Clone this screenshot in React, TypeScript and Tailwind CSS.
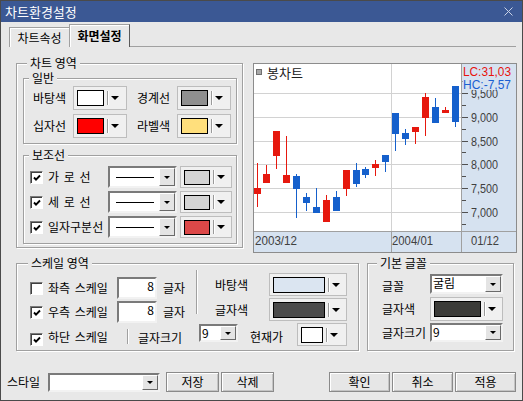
import React from "react";

type Kids = { children?: React.ReactNode };

function Tri() {
  return <div className="h-0 w-0 shrink-0 border-x-[4px] border-t-[4px] border-x-transparent border-t-black" />;
}

function SmallTri() {
  return <div className="h-0 w-0 shrink-0 border-x-[3px] border-t-[3px] border-x-transparent border-t-black" />;
}

function ColorBtn({ box, sw }: { box: string; sw: string }) {
  return (
    <div className={`flex shrink-0 items-center border border-[#bdbdbd] bg-[#f0f0f0] pl-[3px] ${box}`}>
      <div className={`shrink-0 border border-black ${sw}`} />
      <div className="ml-[3px] h-[14px] w-[2px] shrink-0 border-l border-[#9a9a9a] bg-white" />
      <div className="ml-[2px]">
        <Tri />
      </div>
    </div>
  );
}

function Combo({ box, children }: { box: string } & Kids) {
  return (
    <div
      className={`flex shrink-0 border-2 border-t-[#7a7a7a] border-l-[#7a7a7a] border-r-[#f2f2f2] border-b-[#f2f2f2] bg-white ${box}`}
    >
      <div className="min-w-0 flex-1">{children}</div>
      <div className="flex w-[16px] shrink-0 items-center justify-center border border-t-white border-l-white border-r-[#6a6a6a] border-b-[#6a6a6a] bg-[#e4e4e4]">
        <SmallTri />
      </div>
    </div>
  );
}

function Check({ on }: { on?: boolean }) {
  return (
    <div className="relative h-[13px] w-[13px] shrink-0 border border-t-[#7a7a7a] border-l-[#7a7a7a] border-r-white border-b-white bg-white shadow-[inset_1px_1px_0_#404040]">
      {on && (
        <svg className="absolute left-[2px] top-[2px]" width="8" height="8" viewBox="0 0 8 8">
          <path d="M1 3.5 L3 5.6 L7 1.5" fill="none" stroke="#000" strokeWidth="1.9" />
        </svg>
      )}
    </div>
  );
}

function Group({ label, lp, box, children }: { label: string; lp: string; box: string } & Kids) {
  return (
    <div className={`relative shrink-0 border border-[#a0a0a0] shadow-[inset_1px_1px_0_#fff,1px_1px_0_#fff] ${box}`}>
      <span className={`absolute top-[-7px] whitespace-nowrap bg-[#e8e8e8] px-[3px] leading-[12px] ${lp}`}>{label}</span>
      {children}
    </div>
  );
}

function Btn({ box, children }: { box: string } & Kids) {
  return (
    <div
      className={`flex h-[20px] shrink-0 items-center justify-center border border-[#8a8a8a] bg-[#e6e6e6] shadow-[inset_1px_1px_0_#fff,inset_-1px_-1px_0_#c4c4c4] ${box}`}
    >
      {children}
    </div>
  );
}

function VSep({ box }: { box: string }) {
  return <div className={`w-[2px] shrink-0 border-l border-[#a0a0a0] bg-white ${box}`} />;
}

const CANDLES: [number, number, number, number, number, number][] = [
  [0, 124, 130, 99, 143, 0],
  [9, 110, 119, 101, 119, 0],
  [19, 67, 92, 67, 105, 0],
  [29, 111, 119, 72, 119, 0],
  [39, 112, 125, 110, 154, 1],
  [49, 133, 139, 129, 147, 1],
  [59, 143, 149, 124, 149, 1],
  [69, 136, 158, 131, 158, 0],
  [79, 133, 147, 127, 147, 1],
  [89, 106, 125, 106, 132, 0],
  [99, 106, 120, 99, 123, 1],
  [108, 105, 111, 103, 114, 1],
  [118, 100, 104, 96, 112, 0],
  [128, 91, 98, 91, 108, 1],
  [138, 49, 70, 49, 87, 1],
  [148, 69, 75, 65, 81, 1],
  [158, 63, 68, 63, 80, 0],
  [168, 33, 54, 29, 72, 0],
  [178, 43, 59, 34, 59, 1],
  [188, 46, 49, 43, 49, 0],
  [198, 22, 58, 22, 63, 1],
];

const LEVELS: [number, string][] = [
  [29, "9,500"],
  [53, "9,000"],
  [77, "8,500"],
  [100, "8,000"],
  [124, "7,500"],
  [148, "7,000"],
];
const MINOR = [17, 41, 65, 88, 112, 136, 160];

function Chart() {
  const num = "'Liberation Sans', Arial, sans-serif";
  return (
    <div className="h-[190px] w-[264px] shrink-0 border border-[#8c8c8c] bg-white">
      <svg width="262" height="188" viewBox="0 0 262 188" className="block">
        <rect x="208" y="0" width="54" height="188" fill="#d6e2f0" />
        <rect x="0" y="168" width="262" height="20" fill="#d6e2f0" />
        {LEVELS.map(([y]) => (
          <line key={y} x1="0" x2="208" y1={y + 0.5} y2={y + 0.5} stroke="#d2d2d2" />
        ))}
        <line x1="137.5" x2="137.5" y1="0" y2="168" stroke="#d2d2d2" />
        <line x1="0" x2="262" y1="167.5" y2="167.5" stroke="#a0a0a0" />
        <line x1="137.5" x2="137.5" y1="168" y2="188" stroke="#a0a0a0" />
        <line x1="207.5" x2="207.5" y1="0" y2="188" stroke="#a0a0a0" />
        {LEVELS.map(([y]) => (
          <line key={"t" + y} x1="208" x2="214" y1={y + 0.5} y2={y + 0.5} stroke="#505050" />
        ))}
        {MINOR.map((y) => (
          <line key={"m" + y} x1="208" x2="212" y1={y + 0.5} y2={y + 0.5} stroke="#505050" />
        ))}
        {LEVELS.map(([y, t]) => (
          <text
            key={"l" + y}
            x="217"
            y={y + 5}
            fontSize="13"
            fill="#404040"
            fontFamily={num}
            textLength="27"
            lengthAdjust="spacingAndGlyphs"
          >
            {t}
          </text>
        ))}
        <rect x="208.5" y="0" width="53.5" height="26" fill="#d6e2f0" />
        <text x="209" y="12" fontSize="13" fill="#e8130c" fontFamily={num} textLength="48" lengthAdjust="spacingAndGlyphs">
          LC:31,03
        </text>
        <text x="209" y="25" fontSize="13" fill="#1a5fd2" fontFamily={num} textLength="48" lengthAdjust="spacingAndGlyphs">
          HC:-7,57
        </text>
        {CANDLES.map(([x, bt, bb, wt, wb, c]) => (
          <g key={x} fill={c ? "#1560cc" : "#e6180e"}>
            <rect x={x + 3} y={wt} width="1" height={wb - wt} />
            <rect x={x} y={bt} width="7" height={bb - bt} />
          </g>
        ))}
        <rect x="2.5" y="5.5" width="5" height="5" fill="#a8a8a8" stroke="#707070" />
        <text x="13" y="14" fontSize="13" fill="#202020" fontFamily="'Noto Sans CJK KR', sans-serif">
          봉차트
        </text>
        <text x="1" y="181" fontSize="13" fill="#404040" fontFamily={num} textLength="42" lengthAdjust="spacingAndGlyphs">
          2003/12
        </text>
        <text x="138" y="181" fontSize="13" fill="#404040" fontFamily={num} textLength="41" lengthAdjust="spacingAndGlyphs">
          2004/01
        </text>
        <text x="217" y="181" fontSize="13" fill="#404040" fontFamily={num} textLength="28" lengthAdjust="spacingAndGlyphs">
          01/12
        </text>
      </svg>
    </div>
  );
}

function LineRow({ label, sw }: { label: string; sw: string }) {
  return (
    <div className="flex h-[22px] items-center">
      <Check on />
      <span className="ml-[5px] w-[60px] whitespace-nowrap [word-spacing:2px]">{label}</span>
      <Combo box="h-[22px] w-[69px]">
        <div className="flex h-full items-center pl-[6px]">
          <div className="h-px w-[38px] bg-black" />
        </div>
      </Combo>
      <ColorBtn box="ml-[3px] h-[22px] w-[52px]" sw={sw} />
    </div>
  );
}

function ScaleRow({ on, label }: { on?: boolean; label: string }) {
  return (
    <div className="flex h-[22px] items-center">
      <Check on={on} />
      <span className="ml-[5px] w-[69px] whitespace-nowrap [word-spacing:2px]">{label}</span>
      <div className="flex h-[22px] w-[40px] shrink-0 justify-end border-2 border-t-[#7a7a7a] border-l-[#7a7a7a] border-r-[#f2f2f2] border-b-[#f2f2f2] bg-white pr-[1px]">
        8
      </div>
      <span className="ml-[6px] w-[24px] whitespace-nowrap">글자</span>
    </div>
  );
}

export default function App() {
  return (
    <div className="flex h-[401px] w-[523px] flex-col overflow-hidden border border-[#4a4a4a] bg-[#e8e8e8] font-['Noto_Sans_CJK_KR','Noto_Sans',sans-serif] text-[12px] leading-[14px] text-black">
      {/* title bar */}
      <div className="flex h-[21px] shrink-0 items-center justify-between bg-[#3b5894] pl-[4px] pr-[9px] text-[13px] text-white">
        <span>차트환경설정</span>
        <svg width="9" height="9" viewBox="0 0 9 9">
          <path d="M0.5 0.5 L8.5 8.5 M8.5 0.5 L0.5 8.5" stroke="#c9d2e6" strokeWidth="1" />
        </svg>
      </div>

      {/* tabs */}
      <div className="mt-[2px] flex h-[23px] shrink-0 items-end pl-[8px] pr-[6px]">
        <div className="flex h-[20px] w-[60px] shrink-0 items-center justify-center border-l border-t border-[#a0a0a0] shadow-[inset_1px_1px_0_#fff]">
          차트속성
        </div>
        <div className="flex h-[23px] w-[61px] shrink-0 items-center justify-center border-l border-r border-t border-l-[#a0a0a0] border-r-[#5a5a5a] border-t-[#a0a0a0] font-bold shadow-[inset_1px_1px_0_#fff]">
          화면설정
        </div>
        <div className="h-full flex-1 border-b border-[#a0a0a0]" />
      </div>

      {/* top row */}
      <div className="mt-[16px] flex shrink-0 items-start gap-[10px] pl-[15px]">
        <Group label="차트 영역" lp="left-[10px]" box="h-[185px] w-[227px] pl-[6px] pt-[14px]">
          <Group label="일반" lp="left-[5px]" box="h-[66px] w-[214px] pl-[9px] pt-[7px]">
            <div className="flex flex-col gap-[4px]">
              <div className="flex h-[24px] items-center">
                <span className="w-[40px]">바탕색</span>
                <ColorBtn box="h-[24px] w-[54px]" sw="h-[16px] w-[27px] bg-white" />
                <span className="ml-[10px] w-[40px]">경계선</span>
                <ColorBtn box="h-[24px] w-[54px]" sw="h-[16px] w-[27px] bg-[#8f8f8f]" />
              </div>
              <div className="flex h-[24px] items-center">
                <span className="w-[40px]">십자선</span>
                <ColorBtn box="h-[24px] w-[54px]" sw="h-[16px] w-[27px] bg-[#ff0000]" />
                <span className="ml-[10px] w-[40px]">라벨색</span>
                <ColorBtn box="h-[24px] w-[54px]" sw="h-[16px] w-[27px] bg-[#ffdf7c]" />
              </div>
            </div>
          </Group>
          <Group label="보조선" lp="left-[5px]" box="mt-[11px] h-[89px] w-[214px] pl-[6px] pt-[10px]">
            <div className="flex flex-col gap-[3px]">
              <LineRow label="가 로 선" sw="h-[15px] w-[26px] bg-[#d4d4d4]" />
              <LineRow label="세 로 선" sw="h-[15px] w-[26px] bg-[#d4d4d4]" />
              <LineRow label="일자구분선" sw="h-[15px] w-[26px] bg-[#dc4848]" />
            </div>
          </Group>
        </Group>
        <Chart />
      </div>

      {/* second row */}
      <div className="mt-[10px] flex shrink-0 items-start gap-[8px] pl-[15px]">
        <Group label="스케일 영역" lp="left-[11px]" box="h-[88px] w-[343px] pt-[6px]">
          <div className="flex items-start">
            <div className="ml-[13px] mt-[7px] flex flex-col gap-[2px]">
              <ScaleRow label="좌측 스케일" />
              <ScaleRow on label="우측 스케일" />
            </div>
            <VSep box="ml-[9px] h-[44px]" />
            <div className="ml-[17px] mt-[3px] flex flex-col gap-[2px]">
              <div className="flex h-[23px] items-center">
                <span className="w-[54px]">바탕색</span>
                <ColorBtn box="h-[23px] w-[78px]" sw="h-[16px] w-[52px] bg-[#dbe5f1]" />
              </div>
              <div className="flex h-[23px] items-center">
                <span className="w-[54px]">글자색</span>
                <ColorBtn box="h-[23px] w-[78px]" sw="h-[16px] w-[52px] bg-[#4b4b4b]" />
              </div>
            </div>
          </div>
          <div className="flex h-[24px] items-start pl-[13px]">
            <div className="mt-[10px]">
              <Check on />
            </div>
            <span className="ml-[5px] mt-[7px] w-[65px] whitespace-nowrap [word-spacing:2px]">하단 스케일</span>
            <VSep box="ml-[14px] mt-[6px] h-[15px]" />
            <span className="ml-[9px] mt-[8px] w-[48px] whitespace-nowrap">글자크기</span>
            <Combo box="ml-[13px] mt-[1px] h-[18px] w-[39px]">
              <span className="pl-[1px]">9</span>
            </Combo>
            <span className="ml-[12px] mt-[7px] w-[36px] whitespace-nowrap">현재가</span>
            <ColorBtn box="ml-[11px] h-[23px] w-[50px]" sw="h-[16px] w-[22px] bg-white" />
          </div>
        </Group>

        <Group label="기본 글꼴" lp="left-[9px]" box="h-[88px] w-[147px] pl-[14px] pt-[10px]">
          <div className="flex h-[20px] items-center">
            <span className="mt-[3px] w-[48px]">글꼴</span>
            <Combo box="h-[20px] w-[73px]">
              <span className="pl-[1px]">굴림</span>
            </Combo>
          </div>
          <div className="mt-[3px] flex h-[24px] items-center">
            <span className="w-[48px]">글자색</span>
            <ColorBtn box="h-[24px] w-[73px]" sw="h-[16px] w-[47px] bg-[#3b3b38]" />
          </div>
          <div className="mt-[2px] flex h-[19px] items-center">
            <span className="w-[48px] whitespace-nowrap">글자크기</span>
            <Combo box="h-[19px] w-[73px]">
              <span className="pl-[1px]">9</span>
            </Combo>
          </div>
        </Group>
      </div>

      {/* bottom row */}
      <div className="mt-[21px] flex h-[20px] shrink-0 items-center pl-[6px] pr-[6px]">
        <span className="w-[41px]">스타일</span>
        <Combo box="h-[19px] w-[112px]" />
        <Btn box="ml-[6px] w-[53px]">저장</Btn>
        <Btn box="ml-[2px] w-[53px]">삭제</Btn>
        <Btn box="ml-auto w-[61px]">확인</Btn>
        <Btn box="ml-[2px] w-[61px]">취소</Btn>
        <Btn box="ml-[2px] w-[61px]">적용</Btn>
      </div>
    </div>
  );
}
